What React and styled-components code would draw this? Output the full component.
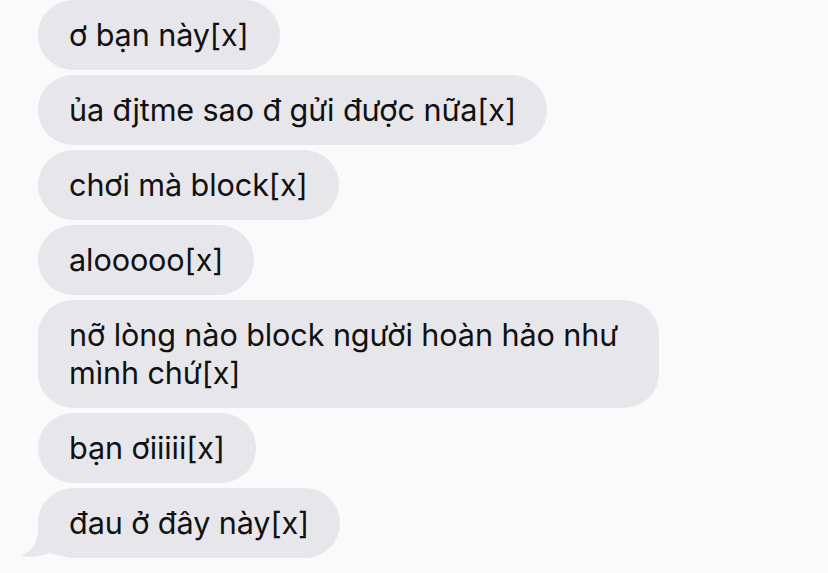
import styled, { createGlobalStyle } from 'styled-components'

const GlobalStyle = createGlobalStyle`
  html, body {
    margin: 0;
    padding: 0;
    background: #fafafa;
  }
`

const Thread = styled.div`
  display: flex;
  flex-direction: column;
  align-items: flex-start;
  gap: 5px;
  padding: 0 0 0 38px;
  width: 828px;
  height: 573px;
  box-sizing: border-box;
  overflow: hidden;
  font-family: Inter, 'Noto Sans', 'Liberation Sans', sans-serif;
`

const Bubble = styled.div`
  position: relative;
  max-width: 559px;
  padding: 16px 31px;
  background: #e6e6eb;
  color: #111;
  border-radius: 35px;
  font-size: 30.6px;
  line-height: 38px;
  letter-spacing: -0.1px;
`

const Tail = styled.svg`
  position: absolute;
  left: -20px;
  bottom: 0;
  width: 40px;
  height: 34px;
`

const messages = [
  'ơ bạn này[x]',
  'ủa đjtme sao đ gửi được nữa[x]',
  'chơi mà block[x]',
  'alooooo[x]',
  'nỡ lòng nào block người hoàn hảo như mình chứ[x]',
  'bạn ơiiiii[x]',
  'đau ở đây này[x]',
]

export default function App() {
  return (
    <>
      <GlobalStyle />
      <Thread>
        {messages.map((text, i) => (
          <Bubble key={i}>
            {i === messages.length - 1 && (
              <Tail viewBox="0 0 40 34">
                <path
                  d="M20 4 C20 18 15 27 2 32 C14 34 24 32 32 29 L40 31 L40 0 Z"
                  fill="#e6e6eb"
                />
              </Tail>
            )}
            {text}
          </Bubble>
        ))}
      </Thread>
    </>
  )
}
